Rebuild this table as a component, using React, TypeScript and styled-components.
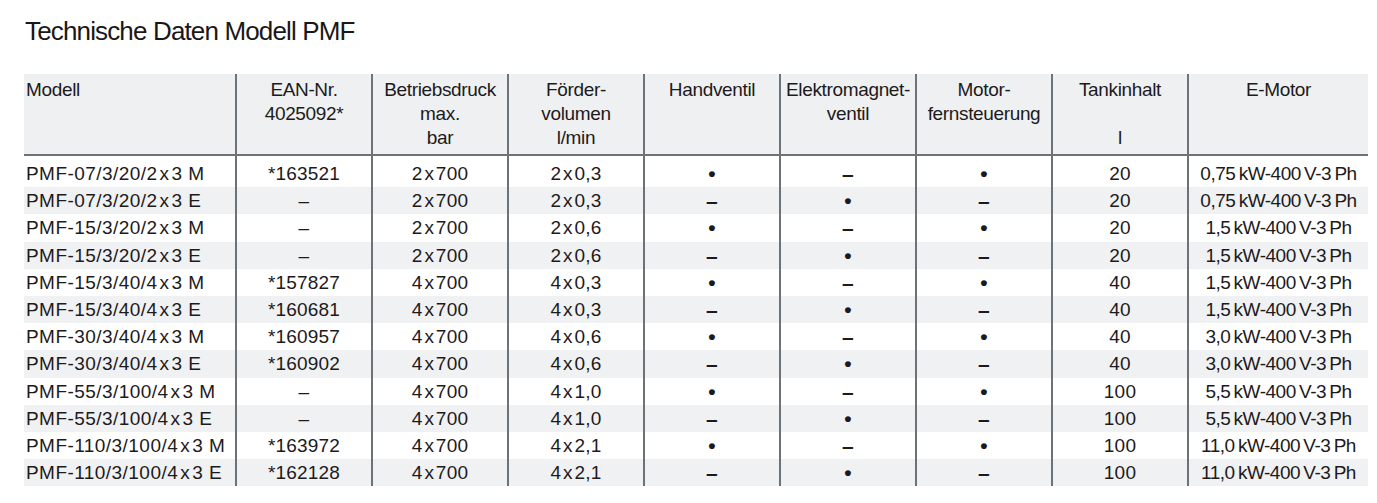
import React from "react";
import styled, { createGlobalStyle } from "styled-components";

const GlobalStyle = createGlobalStyle`
  html, body { margin: 0; padding: 0; background: #ffffff; }
  body {
    font-family: "Liberation Sans", Arial, sans-serif;
    color: #1d1a1b;
  }
`;

const LINE = "#6c7378";
const STRIPE = "#f0f1f2";
const HEAD_BG = "#eef0f2";

const Page = styled.main`
  padding: 18px 9px 0 24px;
`;

const Title = styled.h1`
  margin: 0 0 30px 1px;
  font-size: 26px;
  line-height: 26px;
  font-weight: 400;
  letter-spacing: -0.85px;
  color: #1a1718;
`;

const Table = styled.div`
  width: 1344px;
  display: flex;
  flex-direction: column;
`;

const Row = styled.div<{ $head?: boolean; $striped?: boolean; $first?: boolean }>`
  display: grid;
  grid-template-columns: 211px repeat(7, 136px) 181px;
  box-sizing: border-box;
  height: ${(p) => (p.$head ? "82px" : p.$first ? "31.2px" : "27.2px")};
  background: ${(p) => (p.$head ? HEAD_BG : p.$striped ? STRIPE : "#ffffff")};
  border-bottom: ${(p) => (p.$head ? `2px solid ${LINE}` : "none")};
`;

const HeadCell = styled.div<{ $left?: boolean }>`
  box-sizing: border-box;
  padding: 4px 0 0 ${(p) => (p.$left ? "2px" : "0")};
  border-left: ${(p) => (p.$left ? "none" : `2px solid ${LINE}`)};
  text-align: ${(p) => (p.$left ? "left" : "center")};
  font-size: 19px;
  line-height: 24px;
  letter-spacing: -0.35px;
  white-space: pre-line;
`;

type Kind = "model" | "text" | "mark" | "motor";

const Cell = styled.div<{ $kind: Kind; $first?: boolean }>`
  box-sizing: border-box;
  padding: ${(p) => (p.$first ? "5px" : "1px")} 0 0 ${(p) => (p.$kind === "model" ? "2px" : "0")};
  border-left: ${(p) => (p.$kind === "model" ? "none" : `2px solid ${LINE}`)};
  text-align: ${(p) => (p.$kind === "model" ? "left" : "center")};
  font-size: ${(p) => (p.$kind === "mark" ? "21px" : "19px")};
  line-height: 26.2px;
  letter-spacing: ${(p) =>
    p.$kind === "model" ? "0.45px" : p.$kind === "motor" ? "-0.5px" : "0.2px"};
  font-weight: ${(p) => (p.$kind === "mark" ? 700 : 400)};
  white-space: nowrap;
`;

const headers = [
  "Modell",
  "EAN-Nr.\n4025092*",
  "Betriebsdruck\nmax.\nbar",
  "Förder-\nvolumen\nl/min",
  "Handventil",
  "Elektromagnet-\nventil",
  "Motor-\nfernsteuerung",
  "Tankinhalt\n\u00a0\nl",
  "E-Motor",
];

type Data = {
  model: string;
  ean: string;
  druck: string;
  vol: string;
  hand: boolean;
  tank: string;
  motor: string;
};

const X = "\u200Ax\u200A";
const TS = "\u2009";

const rows: Data[] = [
  { model: `PMF-07/3/20/2${X}3 M`, ean: "*163521", druck: `2${X}700`, vol: `2${X}0,3`, hand: true, tank: "20", motor: "0,75" },
  { model: `PMF-07/3/20/2${X}3 E`, ean: "–", druck: `2${X}700`, vol: `2${X}0,3`, hand: false, tank: "20", motor: "0,75" },
  { model: `PMF-15/3/20/2${X}3 M`, ean: "–", druck: `2${X}700`, vol: `2${X}0,6`, hand: true, tank: "20", motor: "1,5" },
  { model: `PMF-15/3/20/2${X}3 E`, ean: "–", druck: `2${X}700`, vol: `2${X}0,6`, hand: false, tank: "20", motor: "1,5" },
  { model: `PMF-15/3/40/4${X}3 M`, ean: "*157827", druck: `4${X}700`, vol: `4${X}0,3`, hand: true, tank: "40", motor: "1,5" },
  { model: `PMF-15/3/40/4${X}3 E`, ean: "*160681", druck: `4${X}700`, vol: `4${X}0,3`, hand: false, tank: "40", motor: "1,5" },
  { model: `PMF-30/3/40/4${X}3 M`, ean: "*160957", druck: `4${X}700`, vol: `4${X}0,6`, hand: true, tank: "40", motor: "3,0" },
  { model: `PMF-30/3/40/4${X}3 E`, ean: "*160902", druck: `4${X}700`, vol: `4${X}0,6`, hand: false, tank: "40", motor: "3,0" },
  { model: `PMF-55/3/100/4${X}3 M`, ean: "–", druck: `4${X}700`, vol: `4${X}1,0`, hand: true, tank: "100", motor: "5,5" },
  { model: `PMF-55/3/100/4${X}3 E`, ean: "–", druck: `4${X}700`, vol: `4${X}1,0`, hand: false, tank: "100", motor: "5,5" },
  { model: `PMF-110/3/100/4${X}3 M`, ean: "*163972", druck: `4${X}700`, vol: `4${X}2,1`, hand: true, tank: "100", motor: "11,0" },
  { model: `PMF-110/3/100/4${X}3 E`, ean: "*162128", druck: `4${X}700`, vol: `4${X}2,1`, hand: false, tank: "100", motor: "11,0" },
];

const DOT = "•";
const DASH = "–";

export default function App() {
  return (
    <>
      <GlobalStyle />
      <Page>
        <Title>Technische Daten Modell PMF</Title>
        <Table>
          <Row $head>
            {headers.map((h, i) => (
              <HeadCell key={i} $left={i === 0}>
                {h}
              </HeadCell>
            ))}
          </Row>
          {rows.map((r, i) => {
            const first = i === 0;
            return (
              <Row key={r.model} $striped={i % 2 === 1} $first={first}>
                <Cell $kind="model" $first={first}>{r.model}</Cell>
                <Cell $kind="text" $first={first}>{r.ean}</Cell>
                <Cell $kind="text" $first={first}>{r.druck}</Cell>
                <Cell $kind="text" $first={first}>{r.vol}</Cell>
                <Cell $kind="mark" $first={first}>{r.hand ? DOT : DASH}</Cell>
                <Cell $kind="mark" $first={first}>{r.hand ? DASH : DOT}</Cell>
                <Cell $kind="mark" $first={first}>{r.hand ? DOT : DASH}</Cell>
                <Cell $kind="text" $first={first}>{r.tank}</Cell>
                <Cell $kind="motor" $first={first}>{`${r.motor}${TS}kW-400${TS}V-3${TS}Ph`}</Cell>
              </Row>
            );
          })}
        </Table>
      </Page>
    </>
  );
}
